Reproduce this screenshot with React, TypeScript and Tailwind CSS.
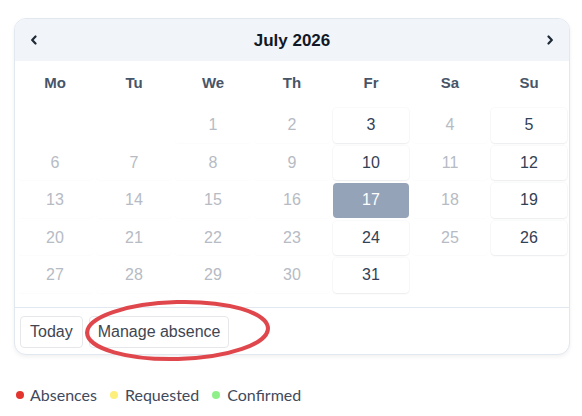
import React from 'react';

const weekdays = ['Mo', 'Tu', 'We', 'Th', 'Fr', 'Sa', 'Su'];

// July 2026 starts on a Wednesday
const leading = 2;
const daysInMonth = 31;
const selectedDay = 17;

// Fridays and Sundays are the highlighted days in this view
const isActive = (col: number) => col === 4 || col === 6;

function Chevron({ dir }: { dir: 'left' | 'right' }) {
  return (
    <svg width="8" height="10" viewBox="0 0 8 10" fill="none">
      <polyline
        points={dir === 'left' ? '5.5,1.5 2.2,5 5.5,8.5' : '2.5,1.5 5.8,5 2.5,8.5'}
        stroke="#1f2937"
        strokeWidth="2.2"
        strokeLinecap="round"
        strokeLinejoin="round"
      />
    </svg>
  );
}

export default function App() {
  const cells: (number | null)[] = [];
  for (let i = 0; i < leading; i++) cells.push(null);
  for (let d = 1; d <= daysInMonth; d++) cells.push(d);
  while (cells.length % 7 !== 0) cells.push(null);

  return (
    <div
      className="relative w-[582px] h-[416px] bg-white pl-[14px] pt-[18px]"
      style={{ fontFamily: '"Liberation Sans", Arial, sans-serif' }}
    >
      {/* Calendar card */}
      <div className="w-[556px] bg-white border border-[#e2e8f0] rounded-[12px] shadow-[0_2px_4px_rgba(15,23,42,0.06)] overflow-hidden">
        {/* Header */}
        <div className="h-[42px] bg-[#f1f5f9] flex items-center justify-between px-[15px]">
          <button className="flex items-center justify-center">
            <Chevron dir="left" />
          </button>
          <span className="text-[17px] font-bold text-[#111827] translate-y-[1px]">July 2026</span>
          <button className="flex items-center justify-center">
            <Chevron dir="right" />
          </button>
        </div>

        {/* Weekdays */}
        <div className="px-[2px]">
          <div className="grid grid-cols-7 gap-x-[3px] h-[44px] items-center">
            {weekdays.map((w) => (
              <div key={w} className="text-center text-[15px] font-bold text-[#475569]">
                {w}
              </div>
            ))}
          </div>

          {/* Days */}
          <div className="grid grid-cols-7 gap-x-[3px] gap-y-[3px] mt-[3px] pb-[14px]">
            {cells.map((day, i) => {
              const col = i % 7;
              if (day === null) return <div key={i} className="h-[34.5px]" />;
              const selected = day === selectedDay;
              const active = isActive(col);
              return (
                <div
                  key={i}
                  className={`h-[34.5px] flex items-center justify-center text-[16px] rounded-[4px] ${
                    selected
                      ? 'bg-[#94a3b8] text-white'
                      : active
                      ? 'bg-white text-[#334155] shadow-[0_1px_2px_rgba(15,23,42,0.06),0_0_0_1px_rgba(15,23,42,0.025)]'
                      : 'bg-white text-[#b6bbc4] shadow-[0_1px_1px_rgba(15,23,42,0.015)]'
                  }`}
                >
                  {day}
                </div>
              );
            })}
          </div>
        </div>

        {/* Footer */}
        <div className="border-t border-[#e2e8f0] flex items-center gap-[6px] pl-[5px] pt-[8px] pb-[6px]">
          <button className="h-[32px] px-[9px] border border-[#e5e7eb] rounded-[4px] text-[16px] text-[#3f4651] bg-white">
            Today
          </button>
          <button className="h-[32px] px-[8px] border border-[#e5e7eb] rounded-[4px] text-[16px] text-[#3f4651] bg-white">
            Manage absence
          </button>
        </div>
      </div>

      {/* Legend */}
      <div
        className="flex items-center gap-[13px] mt-[28px] pl-[2px] text-[16px] text-[#3f4a5c]"
        style={{ fontFamily: 'Lato, "Noto Sans", sans-serif' }}
      >
        <div className="flex items-center gap-[6px]">
          <span className="w-[8px] h-[8px] rounded-full bg-[#e3342f]" />
          <span>Absences</span>
        </div>
        <div className="flex items-center gap-[7px]">
          <span className="w-[8px] h-[8px] rounded-full bg-[#fcef7c]" />
          <span>Requested</span>
        </div>
        <div className="flex items-center gap-[7px]">
          <span className="w-[8px] h-[8px] rounded-full bg-[#8ff08a]" />
          <span>Confirmed</span>
        </div>
      </div>

      {/* Red annotation ellipse */}
      <svg
        className="absolute left-[82px] top-[296px] pointer-events-none"
        width="192"
        height="72"
        viewBox="0 0 192 72"
        fill="none"
      >
        <ellipse cx="95.5" cy="34.5" rx="90.5" ry="28.5" stroke="#e0474c" strokeWidth="4" transform="rotate(-1.5 95.5 34.5)" />
      </svg>
    </div>
  );
}
